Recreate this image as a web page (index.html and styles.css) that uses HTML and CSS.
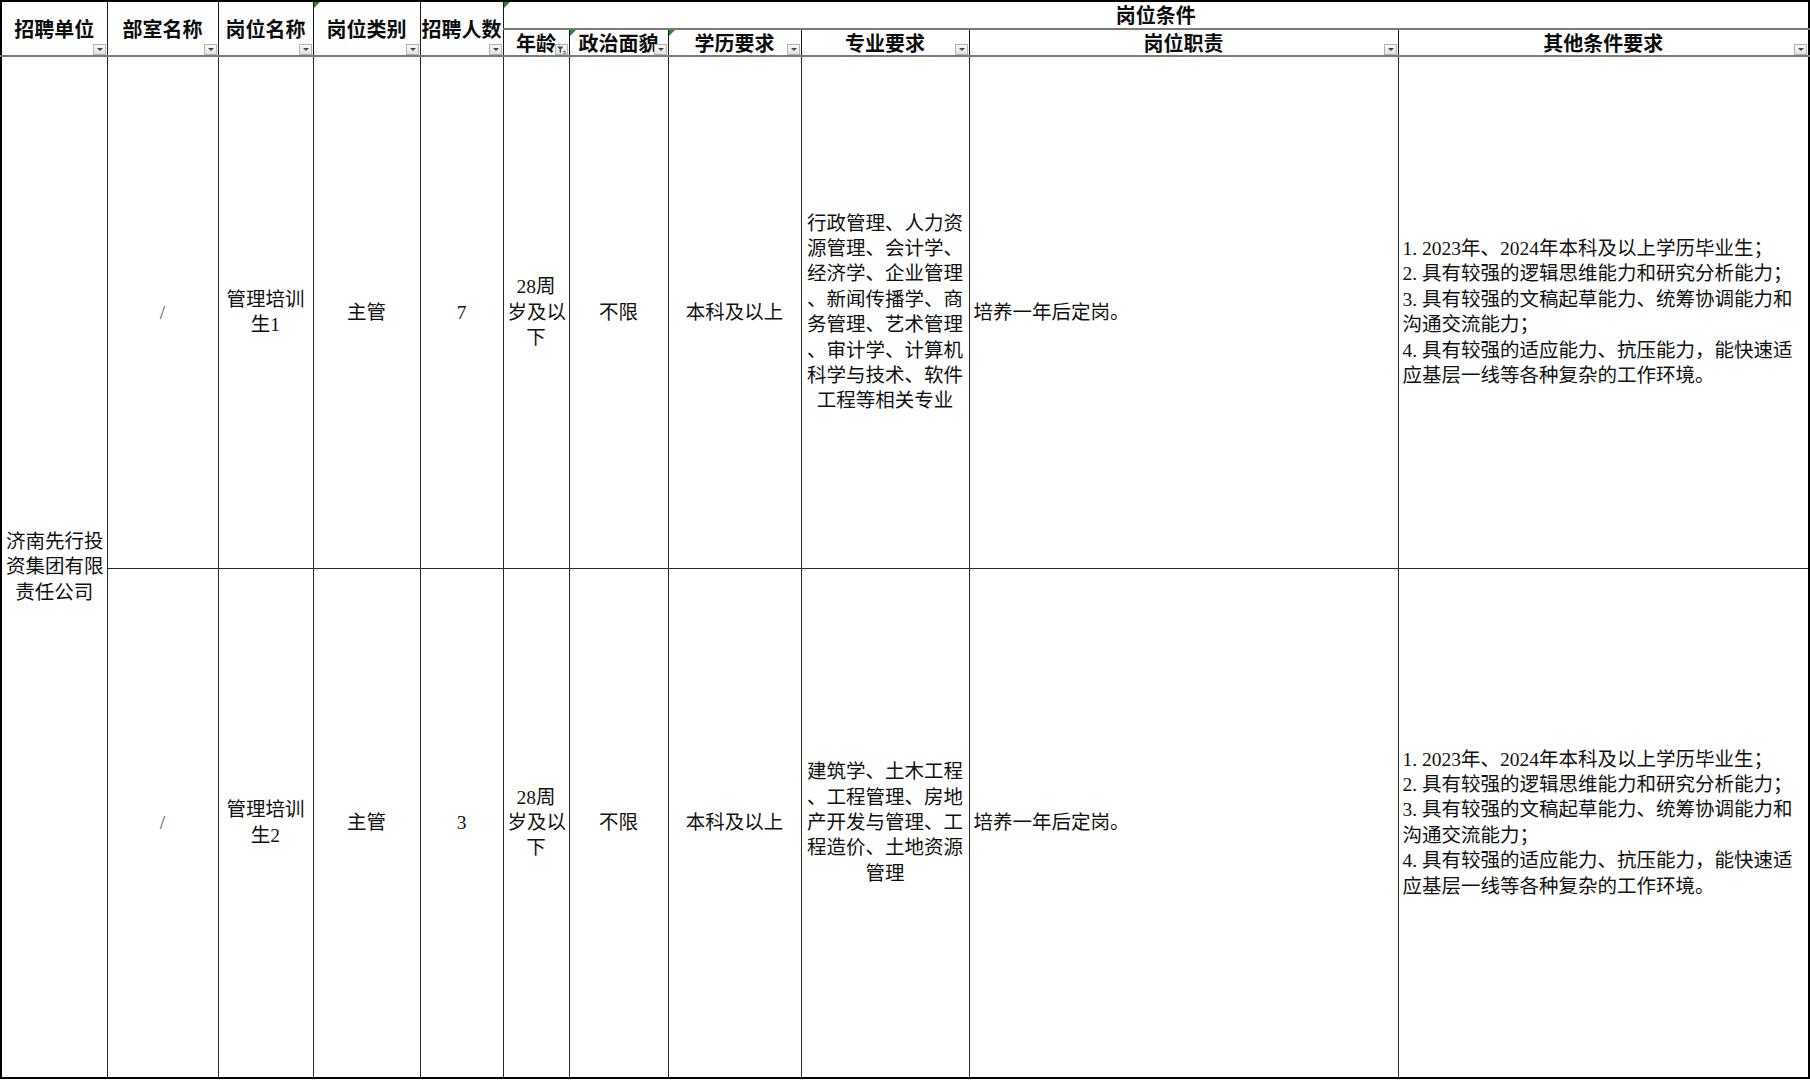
FILE: index.html
```html
<!DOCTYPE html>
<html lang="zh-CN">
<head>
<meta charset="utf-8">
<title>招聘岗位表</title>
<link rel="stylesheet" href="styles.css">
</head>
<body>
<table class="sheet">
  <colgroup>
    <col class="c-unit"><col class="c-dept"><col class="c-post"><col class="c-type"><col class="c-num"><col class="c-age"><col class="c-pol"><col class="c-edu"><col class="c-major"><col class="c-duty"><col class="c-other">
  </colgroup>
  <thead>
    <tr class="h1">
      <th rowspan="2" class="tall">招聘单位<span class="filter"></span></th>
      <th rowspan="2" class="tall">部室名称<span class="filter"></span></th>
      <th rowspan="2" class="tall">岗位名称<span class="filter"></span></th>
      <th rowspan="2" class="tall"><span class="mark"></span>岗位类别<span class="filter"></span></th>
      <th rowspan="2" class="tall">招聘人数<span class="filter"></span></th>
      <th colspan="6" class="group"><span class="mark"></span>岗位条件</th>
    </tr>
    <tr class="h2">
      <th>年龄<span class="filter filtered"><svg viewBox="0 0 12 11" width="12" height="11"><path d="M2 2.5h6.5L6 5.3V9L4.6 8.2V5.3z" fill="#4a4a4a"/><path d="M8.6 7.5h2M8.6 9.2h2" stroke="#4a4a4a" stroke-width="1"/></svg></span></th>
      <th><span class="mark"></span>政治面貌<span class="filter"></span></th>
      <th><span class="mark"></span>学历要求<span class="filter"></span></th>
      <th>专业要求<span class="filter"></span></th>
      <th>岗位职责<span class="filter"></span></th>
      <th>其他条件要求<span class="filter"></span></th>
    </tr>
  </thead>
  <tbody>
    <tr class="row">
      <td rowspan="2">济南先行投<br>资集团有限<br>责任公司</td>
      <td class="slash">/</td>
      <td>管理培训<br>生1</td>
      <td>主管</td>
      <td>7</td>
      <td>28周<br>岁及以<br>下</td>
      <td>不限</td>
      <td>本科及以上</td>
      <td>行政管理、人力资<br>源管理、会计学、<br>经济学、企业管理<br>、新闻传播学、商<br>务管理、艺术管理<br>、审计学、计算机<br>科学与技术、软件<br>工程等相关专业</td>
      <td class="left">培养一年后定岗。</td>
      <td class="left">1. 2023年、2024年本科及以上学历毕业生；<br>2. 具有较强的逻辑思维能力和研究分析能力；<br>3. 具有较强的文稿起草能力、统筹协调能力和<br>沟通交流能力；<br>4. 具有较强的适应能力、抗压能力，能快速适<br>应基层一线等各种复杂的工作环境。</td>
    </tr>
    <tr class="row last">
      <td class="slash">/</td>
      <td>管理培训<br>生2</td>
      <td>主管</td>
      <td>3</td>
      <td>28周<br>岁及以<br>下</td>
      <td>不限</td>
      <td>本科及以上</td>
      <td>建筑学、土木工程<br>、工程管理、房地<br>产开发与管理、工<br>程造价、土地资源<br>管理</td>
      <td class="left">培养一年后定岗。</td>
      <td class="left">1. 2023年、2024年本科及以上学历毕业生；<br>2. 具有较强的逻辑思维能力和研究分析能力；<br>3. 具有较强的文稿起草能力、统筹协调能力和<br>沟通交流能力；<br>4. 具有较强的适应能力、抗压能力，能快速适<br>应基层一线等各种复杂的工作环境。</td>
    </tr>
  </tbody>
</table>
</body>
</html>
```

FILE: styles.css
```css
html, body {
  margin: 0;
  padding: 0;
  background: #ffffff;
}

body {
  font-family: "Liberation Serif", "Noto Sans CJK SC", serif;
  color: #111111;
}

.sheet {
  border-collapse: collapse;
  table-layout: fixed;
  width: 1808px;
  border: 2px solid #000000;
}

.c-unit { width: 106px; }
.c-dept { width: 111px; }
.c-post { width: 95px; }
.c-type { width: 107px; }
.c-num { width: 83px; }
.c-age { width: 66px; }
.c-pol { width: 99px; }
.c-edu { width: 133px; }
.c-major { width: 168px; }
.c-duty { width: 429px; }
.c-other { width: 411px; }

.h1 { height: 28px; }
.h2 { height: 27px; }
.row { height: 512px; }
.row.last { height: 510px; }

th {
  position: relative;
  padding: 0;
  font-family: "Liberation Serif", "Noto Sans CJK SC", serif;
  font-size: 20px;
  font-weight: 700;
  line-height: 22px;
  text-align: center;
  vertical-align: middle;
  white-space: nowrap;
  color: #0d0d0d;
  border-left: 1px solid #1a1a1a;
  border-right: 1px solid #1a1a1a;
  border-top: 2px solid #000000;
  border-bottom: 2px solid #7a7a7a;
}

th.tall {
  padding-top: 3px;
}

th.group {
  padding-top: 1px;
  border-bottom: 2px solid #7a7a7a;
}

.h2 th {
  padding-top: 3px;
  border-top: 2px solid #7a7a7a;
}

td {
  padding: 0 4px;
  font-size: 19.5px;
  line-height: 25.4px;
  font-weight: 400;
  text-align: center;
  vertical-align: middle;
  white-space: nowrap;
  border: 1px solid #2a2a2a;
}

.last td {
  border-bottom: 2px solid #000000;
}

td.left {
  text-align: left;
}

td.slash {
  color: #555555;
}

.filter {
  position: absolute;
  right: 1px;
  bottom: 0;
  width: 13px;
  height: 11px;
  box-sizing: border-box;
  background: linear-gradient(#f8f8f8, #e2e2e2);
  border: 1px solid #b4b4b4;
}

.filter::after {
  content: "";
  position: absolute;
  left: 3px;
  top: 3px;
  border-left: 3px solid transparent;
  border-right: 3px solid transparent;
  border-top: 3px solid #444444;
}

.filter.filtered::after {
  display: none;
}

.filter svg {
  position: absolute;
  left: -1px;
  top: -1px;
}

.mark {
  position: absolute;
  left: 0;
  top: 0;
  width: 0;
  height: 0;
  border-top: 6px solid #1e8c1e;
  border-right: 6px solid transparent;
}
```
